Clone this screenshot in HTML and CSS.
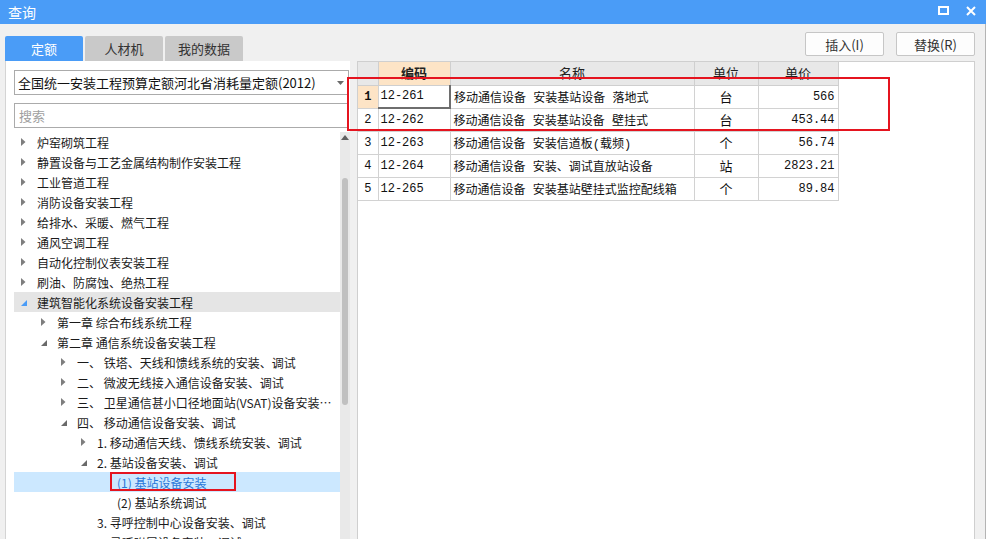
FILE: index.html
```html
<!DOCTYPE html>
<html lang="zh">
<head>
<meta charset="utf-8">
<title>查询</title>
<link rel="stylesheet" href="styles.css">
</head>
<body>
<div class="titlebar">
  <span class="title">查询</span>
  <div class="winbtns">
    <svg class="wmax" width="11" height="9" viewBox="0 0 11 9"><rect x="1" y="1" width="9" height="7" fill="none" stroke="#fff" stroke-width="2"/></svg>
    <svg class="wclose" width="10" height="10" viewBox="0 0 10 10"><path d="M1 1L9 9M9 1L1 9" stroke="#fff" stroke-width="2"/></svg>
  </div>
</div>
<div class="main">
  <div class="left">
    <div class="tabs">
      <div class="tab active">定额</div>
      <div class="tab">人材机</div>
      <div class="tab">我的数据</div>
    </div>
    <div class="lpanel">
      <div class="select"><span>全国统一安装工程预算定额河北省消耗量定额(2012)</span><svg class="caret" width="7" height="4" viewBox="0 0 7 4"><path d="M0 0H7L3.5 4z" fill="#6a6a6a"/></svg></div>
      <div class="search">搜索</div>
      <div class="treewrap">
        <div class="tree">
          <div class="row lv0"><span class="tw"><svg width="5" height="8" viewBox="0 0 5 8"><path d="M0 0L4.5 4 0 8z"/></svg></span><span class="tx">炉窑砌筑工程</span></div>
          <div class="row lv0"><span class="tw"><svg width="5" height="8" viewBox="0 0 5 8"><path d="M0 0L4.5 4 0 8z"/></svg></span><span class="tx">静置设备与工艺金属结构制作安装工程</span></div>
          <div class="row lv0"><span class="tw"><svg width="5" height="8" viewBox="0 0 5 8"><path d="M0 0L4.5 4 0 8z"/></svg></span><span class="tx">工业管道工程</span></div>
          <div class="row lv0"><span class="tw"><svg width="5" height="8" viewBox="0 0 5 8"><path d="M0 0L4.5 4 0 8z"/></svg></span><span class="tx">消防设备安装工程</span></div>
          <div class="row lv0"><span class="tw"><svg width="5" height="8" viewBox="0 0 5 8"><path d="M0 0L4.5 4 0 8z"/></svg></span><span class="tx">给排水、采暖、燃气工程</span></div>
          <div class="row lv0"><span class="tw"><svg width="5" height="8" viewBox="0 0 5 8"><path d="M0 0L4.5 4 0 8z"/></svg></span><span class="tx">通风空调工程</span></div>
          <div class="row lv0"><span class="tw"><svg width="5" height="8" viewBox="0 0 5 8"><path d="M0 0L4.5 4 0 8z"/></svg></span><span class="tx">自动化控制仪表安装工程</span></div>
          <div class="row lv0"><span class="tw"><svg width="5" height="8" viewBox="0 0 5 8"><path d="M0 0L4.5 4 0 8z"/></svg></span><span class="tx">刷油、防腐蚀、绝热工程</span></div>
          <div class="row lv0 hover"><span class="tw open blue"><svg width="6" height="6" viewBox="0 0 6 6"><path d="M6 0V6H0z"/></svg></span><span class="tx">建筑智能化系统设备安装工程</span></div>
          <div class="row lv1"><span class="tw"><svg width="5" height="8" viewBox="0 0 5 8"><path d="M0 0L4.5 4 0 8z"/></svg></span><span class="tx">第一章 综合布线系统工程</span></div>
          <div class="row lv1"><span class="tw open"><svg width="6" height="6" viewBox="0 0 6 6"><path d="M6 0V6H0z"/></svg></span><span class="tx">第二章 通信系统设备安装工程</span></div>
          <div class="row lv2"><span class="tw"><svg width="5" height="8" viewBox="0 0 5 8"><path d="M0 0L4.5 4 0 8z"/></svg></span><span class="tx">一、 铁塔、天线和馈线系统的安装、调试</span></div>
          <div class="row lv2"><span class="tw"><svg width="5" height="8" viewBox="0 0 5 8"><path d="M0 0L4.5 4 0 8z"/></svg></span><span class="tx">二、 微波无线接入通信设备安装、调试</span></div>
          <div class="row lv2"><span class="tw"><svg width="5" height="8" viewBox="0 0 5 8"><path d="M0 0L4.5 4 0 8z"/></svg></span><span class="tx">三、 卫星通信甚小口径地面站(VSAT)设备安装、调试</span></div>
          <div class="row lv2"><span class="tw open"><svg width="6" height="6" viewBox="0 0 6 6"><path d="M6 0V6H0z"/></svg></span><span class="tx">四、 移动通信设备安装、调试</span></div>
          <div class="row lv3"><span class="tw"><svg width="5" height="8" viewBox="0 0 5 8"><path d="M0 0L4.5 4 0 8z"/></svg></span><span class="tx">1. 移动通信天线、馈线系统安装、调试</span></div>
          <div class="row lv3"><span class="tw open"><svg width="6" height="6" viewBox="0 0 6 6"><path d="M6 0V6H0z"/></svg></span><span class="tx">2. 基站设备安装、调试</span></div>
          <div class="row lv4 selected"><span class="tw"></span><span class="tx">(1) 基站设备安装</span></div>
          <div class="row lv4"><span class="tw"></span><span class="tx">(2) 基站系统调试</span></div>
          <div class="row lv3"><span class="tw"></span><span class="tx">3. 寻呼控制中心设备安装、调试</span></div>
          <div class="row lv3"><span class="tw"></span><span class="tx">4. 寻呼附属设备安装、调试</span></div>
        </div>
        <div class="vscroll">
          <svg class="up" width="8" height="5" viewBox="0 0 8 5"><path d="M0 5L4 0 8 5z" fill="#606060"/></svg>
          <div class="thumb"></div>
        </div>
      </div>
    </div>
  </div>
  <div class="right">
    <div class="toolbar">
      <button class="btn">插入(I)</button>
      <button class="btn">替换(R)</button>
    </div>
    <div class="rpanel">
      <table class="grid">
        <colgroup><col class="c0"><col class="c1"><col class="c2"><col class="c3"><col class="c4"></colgroup>
        <thead>
          <tr><th></th><th class="hl">编码</th><th>名称</th><th>单位</th><th>单价</th></tr>
        </thead>
        <tbody>
          <tr><td class="rn hl">1</td><td class="code focus">12-261</td><td>移动通信设备 安装基站设备 落地式</td><td class="unit">台</td><td class="num">566</td></tr>
          <tr><td class="rn">2</td><td class="code">12-262</td><td>移动通信设备 安装基站设备 壁挂式</td><td class="unit">台</td><td class="num">453.44</td></tr>
          <tr><td class="rn">3</td><td class="code">12-263</td><td>移动通信设备 安装信道板(载频)</td><td class="unit">个</td><td class="num">56.74</td></tr>
          <tr><td class="rn">4</td><td class="code">12-264</td><td>移动通信设备 安装、调试直放站设备</td><td class="unit">站</td><td class="num">2823.21</td></tr>
          <tr><td class="rn">5</td><td class="code">12-265</td><td>移动通信设备 安装基站壁挂式监控配线箱</td><td class="unit">个</td><td class="num">89.84</td></tr>
        </tbody>
      </table>
    </div>
  </div>
</div>
<div class="mark mark-rows"></div>
<div class="mark mark-node"></div>
</body>
</html>
```

FILE: styles.css
```css
* { box-sizing: border-box; }
html, body { margin: 0; padding: 0; }
body {
  width: 986px;
  height: 539px;
  overflow: hidden;
  background: #f0f0f0;
  font-family: "Noto Sans CJK SC", "Microsoft YaHei", sans-serif;
  font-size: 12px;
  color: #1a1a1a;
  position: relative;
}
.titlebar {
  height: 24px;
  background: #4a9cf7;
  display: flex;
  align-items: center;
  justify-content: space-between;
  padding: 0 10px 0 8px;
}
.title { color: #fff; font-size: 14px; line-height: 24px; }
.winbtns { display: flex; align-items: center; gap: 17px; }
.wmax { margin-top: -3px; }
.wclose { margin-top: -3px; }

.main {
  height: 515px;
  display: flex;
  gap: 7px;
  padding: 8px 10px 0 5px;
  border-right: 1px solid #b4b4b4;
}
.left {
  width: 345px;
  margin-top: 4px;
  display: flex;
  flex-direction: column;
}
.tabs { display: flex; gap: 2px; height: 25px; }
.tab {
  width: 78px;
  height: 25px;
  line-height: 25px;
  text-align: center;
  background: #c9c9c9;
  color: #333;
  border-radius: 2px 2px 0 0;
  font-size: 13px;
}
.tab.active { background: #4a9cf7; color: #fff; }

.lpanel {
  flex: 1;
  background: #fff;
  border-left: 1px solid #d4d4d4;
  padding: 9px 0 0 8px;
  display: flex;
  flex-direction: column;
  min-height: 0;
}
.select {
  width: 335px;
  height: 25px;
  border: 1px solid #ababab;
  display: flex;
  align-items: center;
  justify-content: space-between;
  padding: 0 4px 0 3px;
  font-size: 13px;
  color: #111;
}
.search {
  width: 335px;
  height: 25px;
  margin-top: 8px;
  border: 1px solid #ababab;
  line-height: 23px;
  padding-left: 4px;
  color: #a0a0a0;
  font-size: 13px;
}
.treewrap {
  margin-top: 4px;
  flex: 1;
  display: flex;
  min-height: 0;
  overflow: hidden;
}
.tree { width: 326px; }
.row {
  height: 20px;
  display: flex;
  align-items: center;
  white-space: nowrap;
  overflow: hidden;
  color: #1a1a1a;
}
.row .tx { overflow: hidden; text-overflow: ellipsis; flex: 1; min-width: 0; }
.tw {
  width: 16px;
  flex: none;
  display: flex;
  align-items: center;
}
.tw svg { fill: #7e7e7e; display: block; }
.tw.open svg { fill: #6a6a6a; margin-top: 2px; }
.tw.blue svg { fill: #4a9cf7; }
.lv0 { padding-left: 7px; }
.lv1 { padding-left: 27px; }
.lv2 { padding-left: 47px; }
.lv3 { padding-left: 67px; }
.lv4 { padding-left: 87px; }
.row.hover { background: #e5e5e5; }
.row.selected { background: #cce8ff; }
.row.selected .tx { color: #2a78d8; }

.vscroll {
  width: 10px;
  background: #e9e9e9;
  display: flex;
  flex-direction: column;
  align-items: center;
  padding-top: 3px;
}
.up { display: block; }
.thumb {
  margin-top: 38px;
  width: 6px;
  height: 227px;
  background: #c0c0c0;
  border-radius: 3px;
}

.right {
  flex: 1;
  display: flex;
  flex-direction: column;
}
.toolbar {
  height: 24px;
  display: flex;
  justify-content: flex-end;
  gap: 12px;
  margin-bottom: 5px;
}
.btn {
  width: 79px;
  height: 24px;
  background: #fdfdfd;
  border: 1px solid #c6c6c6;
  border-radius: 2px;
  font-family: "Noto Sans CJK SC", sans-serif;
  font-size: 13px;
  color: #333;
  padding: 0;
}
.rpanel {
  flex: 1;
  background: #fff;
  border: 1px solid #cfcfcf;
  border-bottom: none;
}
.grid {
  border-collapse: collapse;
  table-layout: fixed;
  width: 480px;
  font-family: "Liberation Mono", "Noto Sans CJK SC", monospace;
  font-size: 12px;
}
.c0 { width: 20px; }
.c1 { width: 72px; }
.c2 { width: 244px; }
.c3 { width: 64px; }
.c4 { width: 80px; }
.grid th {
  height: 23px;
  background: #e8e8e8;
  border: 1px solid #cfcfcf;
  border-top: none;
  font-family: "Noto Sans CJK SC", sans-serif;
  font-weight: normal;
  font-size: 13px;
  color: #222;
  padding: 0;
  line-height: 22px;
}
.grid th:first-child { border-left: none; }
.grid th.hl { background: #fde4c6; font-weight: bold; }
.grid td {
  height: 23px;
  border: 1px solid #d2d2d2;
  padding: 0 3px;
  white-space: nowrap;
  overflow: hidden;
  color: #111;
}
.grid td:first-child { border-left: none; }
.grid td.rn { text-align: center; padding: 0; }
.grid td.rn.hl { background: #fde4c6; font-weight: bold; }
.grid td.code { padding-left: 2px; }
.grid td.focus { border-left: 1px solid #3d8fe8; border-right: 2px solid #6e6e6e; border-bottom: 2px solid #6e6e6e; }
.grid td.unit { text-align: center; font-family: "Noto Sans CJK SC", sans-serif; font-size: 13px; }
.grid td.num { text-align: right; }

.mark {
  position: absolute;
  border: 2px solid #e5141f;
  pointer-events: none;
}
.mark-rows { left: 347px; top: 77px; width: 543px; height: 54px; }
.mark-node { left: 110px; top: 472px; width: 126px; height: 19px; }
```
